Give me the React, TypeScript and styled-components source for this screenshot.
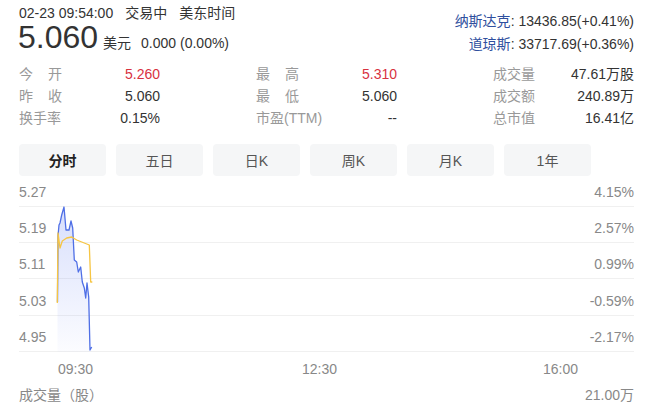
import styled, { createGlobalStyle } from "styled-components";

const GlobalStyle = createGlobalStyle`
  body {
    margin: 0;
    background: #fff;
    font-family: "Liberation Sans", Arial, "Noto Sans CJK SC", sans-serif;
    color: #333;
  }
`;

const stats = [
  [
    { label: "今开", value: "5.260", up: true, spread: true },
    { label: "昨收", value: "5.060", spread: true },
    { label: "换手率", value: "0.15%" },
  ],
  [
    { label: "最高", value: "5.310", up: true, spread: true },
    { label: "最低", value: "5.060", spread: true },
    { label: "市盈(TTM)", value: "--" },
  ],
  [
    { label: "成交量", value: "47.61万股" },
    { label: "成交额", value: "240.89万" },
    { label: "总市值", value: "16.41亿" },
  ],
];

const tabs = ["分时", "五日", "日K", "周K", "月K", "1年"];

const gridRows = [
  { h: 31, left: "5.27", right: "4.15%" },
  { h: 36, left: "5.19", right: "2.57%" },
  { h: 36, left: "5.11", right: "0.99%" },
  { h: 37, left: "5.03", right: "-0.59%" },
  { h: 36, left: "4.95", right: "-2.17%" },
];

const ticks = [
  { t: "09:30", left: 39 },
  { t: "12:30", left: 283 },
  { t: "16:00", left: 524 },
];

// page coordinates, shifted into chart space below
const OX = 19;
const OY = 176;
const price: [number, number][] = [
  [57.5, 302], [58, 236], [59, 225], [60, 223], [61.7, 215], [64, 207],
  [66, 230], [69, 230], [71, 221], [72.7, 228], [74.3, 260], [76.7, 262],
  [78.3, 272], [80.7, 267], [82.3, 282], [84.3, 288], [85.7, 298],
  [87, 283], [88.7, 297], [90, 350], [91.7, 347],
];
const avg: [number, number][] = [
  [57.3, 303], [58, 233], [60, 248], [62.3, 241], [66.7, 238], [71.7, 237],
  [76.7, 240], [89.3, 245], [90.7, 282], [92.3, 282],
];
const toPts = (p: [number, number][]) =>
  p.map(([x, y]) => `${(x - OX).toFixed(1)},${(y - OY).toFixed(1)}`).join(" ");

const Page = styled.div`
  width: 615px;
  padding: 0 16px 0 19px;
`;

const Header = styled.div`
  display: flex;
  justify-content: space-between;
  height: 53px;
`;

const MetaLine = styled.div`
  margin-top: 5px;
  height: 16px;
  font-size: 14px;
  line-height: 16px;
  color: #333;
  display: flex;
  align-items: center;
  gap: 12px;
`;

const PriceLine = styled.div`
  display: flex;
  align-items: baseline;
  height: 32px;
  line-height: 32px;
`;

const Price = styled.span`
  font-size: 32px;
  color: #333;
  margin-left: -1px;
`;

const Unit = styled.span`
  font-size: 14px;
  margin-left: 5px;
`;

const Change = styled.span`
  font-size: 14px;
  margin-left: 10px;
`;

const Indices = styled.div`
  padding-top: 10px;
  font-size: 14px;
  text-align: right;
`;

const IndexRow = styled.div`
  height: 23px;
  line-height: 23px;
`;

const IndexName = styled.span`
  color: #2f4f9e;
`;

const Stats = styled.div`
  margin-top: 10px;
  display: flex;
  justify-content: space-between;
`;

const StatGroup = styled.div`
  width: 141px;
`;

const StatRow = styled.div`
  display: flex;
  justify-content: space-between;
  align-items: center;
  height: 22px;
  font-size: 14px;
  line-height: 16px;
`;

const StatLabel = styled.span<{ $spread?: boolean }>`
  color: #999;
  width: ${(p) => (p.$spread ? "43px" : "auto")};
  text-align: ${(p) => (p.$spread ? "justify" : "left")};
  text-align-last: ${(p) => (p.$spread ? "justify" : "auto")};
`;

const StatValue = styled.span<{ $up?: boolean }>`
  color: ${(p) => (p.$up ? "#d8323f" : "#333")};
`;

const Tabs = styled.div`
  margin-top: 15px;
  display: flex;
  gap: 10px;
`;

const Tab = styled.div<{ $active?: boolean }>`
  width: 87px;
  height: 32px;
  border-radius: 4px;
  background: #f5f6f7;
  display: flex;
  align-items: center;
  justify-content: center;
  font-size: 14px;
  color: ${(p) => (p.$active ? "#222" : "#555")};
  font-weight: ${(p) => (p.$active ? 700 : 400)};
`;

const Chart = styled.div`
  position: relative;
`;

const GridRow = styled.div<{ $h: number }>`
  height: ${(p) => p.$h}px;
  box-sizing: border-box;
  border-bottom: 1px solid #f0f0f0;
  display: flex;
  justify-content: space-between;
  align-items: flex-end;
  padding-bottom: 6px;
  font-size: 14px;
  line-height: 16px;
  color: #888;
`;

const Plot = styled.svg`
  position: absolute;
  left: 0;
  top: 0;
  width: 615px;
  height: 176px;
  overflow: visible;
`;

const Axis = styled.div`
  position: relative;
  height: 16px;
  margin-top: 9px;
  font-size: 14px;
  line-height: 16px;
  color: #888;
`;

const Tick = styled.span<{ $left: number }>`
  position: absolute;
  top: 0;
  left: ${(p) => p.$left}px;
`;

const VolumeRow = styled.div`
  margin-top: 10px;
  height: 16px;
  display: flex;
  justify-content: space-between;
  align-items: center;
  font-size: 14px;
  line-height: 16px;
  color: #888;
`;

export default function App() {
  const pricePts = toPts(price);
  const last = price[price.length - 1];
  const areaPts = `${(price[0][0] - OX).toFixed(1)},${352 - OY} ${pricePts} ${(last[0] - OX).toFixed(1)},${352 - OY}`;
  return (
    <>
      <GlobalStyle />
      <Page>
        <Header>
          <div>
            <MetaLine>
              <span>02-23 09:54:00</span>
              <span>交易中</span>
              <span>美东时间</span>
            </MetaLine>
            <PriceLine>
              <Price>5.060</Price>
              <Unit>美元</Unit>
              <Change>0.000 (0.00%)</Change>
            </PriceLine>
          </div>
          <Indices>
            <IndexRow>
              <IndexName>纳斯达克</IndexName>: 13436.85(+0.41%)
            </IndexRow>
            <IndexRow>
              <IndexName>道琼斯</IndexName>: 33717.69(+0.36%)
            </IndexRow>
          </Indices>
        </Header>

        <Stats>
          {stats.map((group, i) => (
            <StatGroup key={i}>
              {group.map((s) => (
                <StatRow key={s.label}>
                  <StatLabel $spread={s.spread}>{s.label}</StatLabel>
                  <StatValue $up={s.up}>{s.value}</StatValue>
                </StatRow>
              ))}
            </StatGroup>
          ))}
        </Stats>

        <Tabs>
          {tabs.map((t, i) => (
            <Tab key={t} $active={i === 0}>
              {t}
            </Tab>
          ))}
        </Tabs>

        <Chart>
          {gridRows.map((r) => (
            <GridRow key={r.left} $h={r.h}>
              <span>{r.left}</span>
              <span>{r.right}</span>
            </GridRow>
          ))}
          <Plot viewBox="0 0 615 176">
            <defs>
              <linearGradient id="fill" x1="0" y1="0" x2="0" y2="1">
                <stop offset="0%" stopColor="#4e6ef2" stopOpacity="0.22" />
                <stop offset="100%" stopColor="#4e6ef2" stopOpacity="0.02" />
              </linearGradient>
            </defs>
            <polygon points={areaPts} fill="url(#fill)" />
            <polyline points={pricePts} fill="none" stroke="#4f6fe6" strokeWidth="1.3" strokeLinejoin="round" />
            <polyline points={toPts(avg)} fill="none" stroke="#f6c543" strokeWidth="1.3" strokeLinejoin="round" />
          </Plot>
        </Chart>

        <Axis>
          {ticks.map((k) => (
            <Tick key={k.t} $left={k.left}>
              {k.t}
            </Tick>
          ))}
        </Axis>

        <VolumeRow>
          <span>成交量（股）</span>
          <span>21.00万</span>
        </VolumeRow>
      </Page>
    </>
  );
}
